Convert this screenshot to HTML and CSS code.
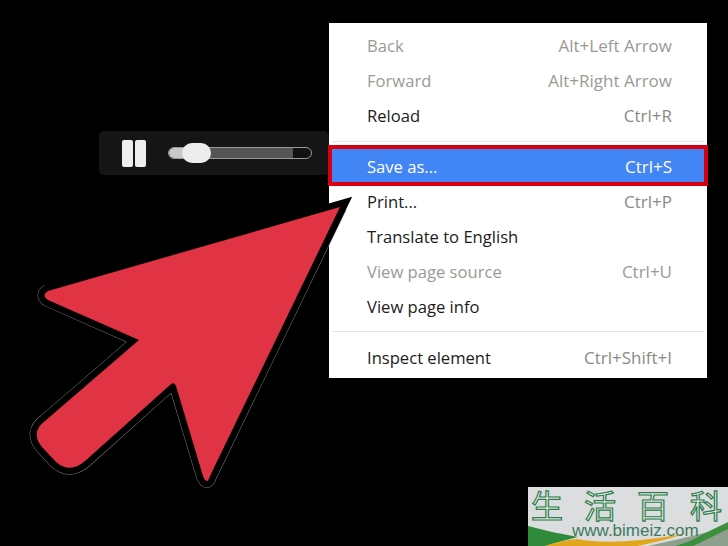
FILE: index.html
```html
<!DOCTYPE html>
<html lang="en">

<head>
  <meta charset="UTF-8" />
  <meta name="viewport" content="width=device-width, initial-scale=1.0" />
  <title>Save as</title>
  <link rel="stylesheet" href="styles.css">
</head>

<body>
  <div class="stage">
    <div class="player">
      <div class="pause">
        <span class="pause-bar"></span>
        <span class="pause-bar"></span>
      </div>
      <div class="slider">
        <span class="slider-played"></span>
        <span class="slider-buffered"></span>
        <span class="slider-knob"></span>
      </div>
    </div>

    <ul class="menu">
      <li class="item off"><span>Back</span><span class="keys">Alt+Left Arrow</span></li>
      <li class="item off"><span>Forward</span><span class="keys">Alt+Right Arrow</span></li>
      <li class="item"><span>Reload</span><span class="keys">Ctrl+R</span></li>
      <li class="sep"></li>
      <li class="item selected"><span>Save as...</span><span class="keys">Ctrl+S</span></li>
      <li class="item"><span>Print...</span><span class="keys">Ctrl+P</span></li>
      <li class="item"><span>Translate to English</span></li>
      <li class="item off"><span>View page source</span><span class="keys">Ctrl+U</span></li>
      <li class="item"><span>View page info</span></li>
      <li class="sep sep-low"></li>
      <li class="item"><span>Inspect element</span><span class="keys">Ctrl+Shift+I</span></li>
    </ul>
  </div>

  <!-- big pointer over the menu -->
  <svg class="arrow" width="728" height="546" viewBox="0 0 728 546">
    <path class="arrow-edge" d="M340 207 L210 476 Q207 486 203 476 L176 386 Q174 381 170 385 L85 461 Q70 474 56 462 L42 447 Q30 432 45 421 L139 340 L48 300 Q41 295 48 291" />
    <path class="arrow-line" d="M340 207 L210 476 Q207 486 203 476 L176 386 Q174 381 170 385 L85 461 Q70 474 56 462 L42 447 Q30 432 45 421 L139 340 L48 300 Q41 295 48 291 Z" />
    <path class="arrow-fill" d="M340 207 L210 476 Q207 486 203 476 L176 386 Q174 381 170 385 L85 461 Q70 474 56 462 L42 447 Q30 432 45 421 L139 340 L48 300 Q41 295 48 291 Z" />
  </svg>

  <div class="mark">
    <svg class="mark-bg" width="200" height="59" viewBox="0 0 200 59">
      <path d="M120 59 L160 50 L200 40 L200 59 Z" fill="#8f9f8e" />
      <path d="M0 39 Q25 46 50 50 Q30 55 17 59 L0 59 Z" fill="#2f8a3a" />
      <path d="M17 59 Q35 53 50 52 Q70 56 100 54 Q130 52 160 46 Q135 54 110 59 Z" fill="#e2a61e" />
      <path d="M147 59 Q165 54 175 47 Q190 40 200 35 L200 42 Q180 52 165 59 Z" fill="#3d8f3f" />
    </svg>
    <div class="mark-title"><span>生</span><span>活</span><span>百</span><span>科</span></div>
    <div class="mark-url">www.bimeiz.com</div>
  </div>
</body>

</html>
```

FILE: styles.css
```css
* {
  box-sizing: border-box;
}

body {
  margin: 0;
  background: #000;
  font-family: 'Open Sans', 'Noto Sans', sans-serif;
  overflow: hidden;
}

.stage {
  display: flex;
  align-items: flex-start;
  width: 728px;
  height: 546px;
  padding: 23px 21px 0 99px;
}

/* video controls */
.player {
  display: flex;
  align-items: center;
  gap: 22px;
  width: 230px;
  height: 44px;
  margin-top: 108px;
  padding-left: 23px;
  background: #151515;
  border-radius: 5px;
}

.pause {
  display: flex;
  gap: 2px;
}

.pause-bar {
  width: 11px;
  height: 27px;
  background: #eee;
  border-radius: 2px;
}

.slider {
  position: relative;
  display: flex;
  width: 144px;
  height: 12px;
  border: 1px solid #9a9a9a;
  border-radius: 6px;
  background: #111;
}

.slider-played {
  width: 20px;
  background: #c8c8c8;
  border-radius: 5px 0 0 5px;
}

.slider-buffered {
  width: 104px;
  background: #555;
}

.slider-knob {
  position: absolute;
  left: 13px;
  top: -5px;
  width: 29px;
  height: 20px;
  background: #ececec;
  border-radius: 10px;
}

/* context menu */
.menu {
  width: 378px;
  height: 355px;
  margin: 0;
  padding: 5px 0 0;
  list-style: none;
  background: #fff;
}

.item {
  display: flex;
  justify-content: space-between;
  align-items: center;
  height: 35px;
  padding: 0 35px 0 38px;
  font-size: 16.6px;
  color: #1b1b1b;
}

.keys {
  font-size: 17px;
  color: #8a8a86;
}

.off,
.off .keys {
  color: #9a9a94;
}

.sep {
  height: 1px;
  margin: 8px 3px 3px;
  background: #e4e4e4;
}

.sep-low {
  margin: 7px 3px 8px;
}

.item.selected {
  height: 41px;
  margin: 0 -1px -2px;
  padding: 2px 32px 0 35px;
  background: #4285f4;
  border: 4px solid #d8000f;
  color: #fff;
  position: relative;
}

.selected .keys {
  color: #fff;
}

/* pointer */
.arrow {
  position: absolute;
  left: 0;
  top: 0;
}

.arrow-edge {
  fill: none;
  stroke: #7c7c7c;
  stroke-width: 14;
}

.arrow-line {
  fill: none;
  stroke: #000;
  stroke-width: 13;
}

.arrow-fill {
  fill: #e03344;
}

/* corner watermark */
.mark {
  position: absolute;
  right: 0;
  bottom: 0;
  width: 200px;
  height: 59px;
  background: #dcdddf;
}

.mark-bg {
  position: absolute;
  left: 0;
  top: 0;
}

.mark-title {
  position: relative;
  display: flex;
  gap: 21px;
  padding-left: 3px;
  font-family: 'Noto Sans CJK SC', sans-serif;
  font-size: 32px;
  line-height: 34px;
  color: #e8eeea;
  -webkit-text-stroke: 1.2px #2c7c4a;
}

.mark-url {
  position: absolute;
  left: 44px;
  top: 35px;
  font-family: 'Liberation Sans', sans-serif;
  font-size: 17px;
  line-height: 17px;
  color: #3d7a60;
}
```
